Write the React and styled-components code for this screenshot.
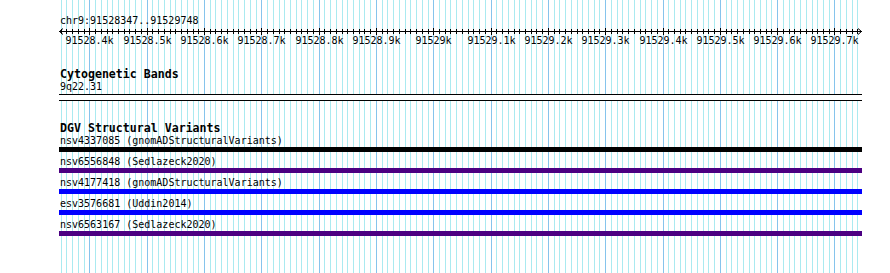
import React from "react";
import styled, { createGlobalStyle } from "styled-components";

const START = 91528347;
const END = 91529748;
const WIDTH = 803;
const HEIGHT = 273;

const toX = (bp) => Math.round(((bp - START) * WIDTH) / (END - START));

const minorTicks = [];
for (let bp = 91528350; bp <= END; bp += 10) minorTicks.push(bp);
const majorTicks = minorTicks.filter((bp) => bp % 100 === 0);

const tickLabel = (bp) =>
  bp % 1000 === 0 ? `${bp / 1000}k` : `${(bp / 1000).toFixed(1)}k`;

const features = [
  { name: "nsv4337085", source: "gnomADStructuralVariants", color: "#000000" },
  { name: "nsv6556848", source: "Sedlazeck2020", color: "#4b0082" },
  { name: "nsv4177418", source: "gnomADStructuralVariants", color: "#0000ff" },
  { name: "esv3576681", source: "Uddin2014", color: "#0000ff" },
  { name: "nsv6563167", source: "Sedlazeck2020", color: "#4b0082" },
];

const GlobalStyle = createGlobalStyle`
  body{
    margin:0;
    background:#ffffff;
    font-family:"DejaVu Sans Mono","Liberation Mono",monospace;
    color:#000;
  }
`;

const Browser = styled.div`
  position:relative;
  width:890px;
  height:${HEIGHT}px;
  overflow:hidden;
`;

const GridLayer = styled.svg`
  position:absolute;
  top:0;
  left:59px;
  z-index:0;
`;

const Tracks = styled.div`
  position:relative;
  z-index:1;
  margin-left:59px;
  width:${WIDTH}px;
  padding-top:15px;
`;

const RulerLabel = styled.div`
  font-size:10px;
  line-height:12px;
  padding-left:1px;
`;

const Axis = styled.svg`
  display:block;
  overflow:visible;
  text{
    font-family:"DejaVu Sans Mono","Liberation Mono",monospace;
    font-size:10px;
  }
`;

const Section = styled.section`
  margin-top:20px;
`;

const TrackTitle = styled.h3`
  margin:0;
  font-size:11.6px;
  line-height:14px;
  font-weight:bold;
  padding-left:1px;
`;

const FeatureLabel = styled.div`
  font-size:10px;
  line-height:12px;
  padding-left:1px;
  white-space:nowrap;
`;

const CytoBand = styled.div`
  box-sizing:border-box;
  margin-top:1px;
  height:7px;
  background:#ffffff;
  border-top:1px solid #000;
  border-bottom:1px solid #000;
`;

const Row = styled.div`
  margin-bottom:4px;
`;

const Bar = styled.div`
  height:5px;
  background:${({ color }) => color};
`;

const Grid = () => (
  <GridLayer width={WIDTH} height={HEIGHT}>
    {minorTicks.map((bp) => (
      <line
        key={bp}
        x1={toX(bp) + 0.5}
        x2={toX(bp) + 0.5}
        y1={0}
        y2={HEIGHT}
        stroke={bp % 100 === 0 ? "#86c4ec" : "#aaeaf0"}
        strokeWidth={1}
      />
    ))}
  </GridLayer>
);

const Ruler = () => (
  <>
    <RulerLabel>chr9:91528347..91529748</RulerLabel>
    <Axis width={WIDTH} height={20}>
      <line x1={0} x2={WIDTH} y1={4.5} y2={4.5} stroke="#000" />
      <polyline points="4,1.5 0.5,4.5 4,7.5" fill="none" stroke="#000" />
      <polyline points={`${WIDTH - 4},1.5 ${WIDTH - 0.5},4.5 ${WIDTH - 4},7.5`} fill="none" stroke="#000" />
      {minorTicks.map((bp) => {
        const major = bp % 100 === 0;
        return (
          <line
            key={bp}
            x1={toX(bp) + 0.5}
            x2={toX(bp) + 0.5}
            y1={major ? 1 : 2}
            y2={major ? 8 : 7}
            stroke="#000"
          />
        );
      })}
      {majorTicks.map((bp) => (
        <text key={bp} x={toX(bp) + 0.5} y={17} textAnchor="middle">
          {tickLabel(bp)}
        </text>
      ))}
    </Axis>
  </>
);

export default function App() {
  return (
    <>
      <GlobalStyle />
      <Browser>
        <Grid />
        <Tracks>
          <Ruler />
          <Section>
            <TrackTitle>Cytogenetic Bands</TrackTitle>
            <FeatureLabel>9q22.31</FeatureLabel>
            <CytoBand />
          </Section>
          <Section>
            <TrackTitle>DGV Structural Variants</TrackTitle>
            {features.map((f) => (
              <Row key={f.name}>
                <FeatureLabel>
                  {f.name} ({f.source})
                </FeatureLabel>
                <Bar color={f.color} />
              </Row>
            ))}
          </Section>
        </Tracks>
      </Browser>
    </>
  );
}
